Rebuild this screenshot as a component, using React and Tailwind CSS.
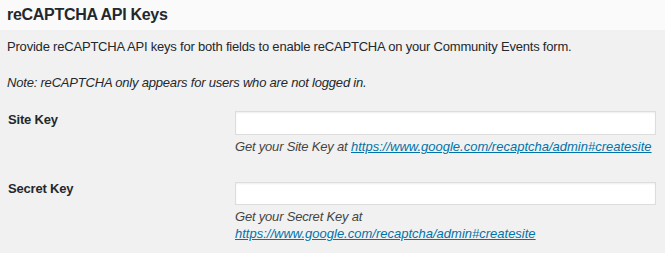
import React from 'react';

const link = 'https://www.google.com/recaptcha/admin#createsite';

function KeyRow({ label, hint, wrap, top }) {
  return <div className={`flex ${top}`}>
    <div className="w-[228px] shrink-0 pl-px text-[13px] font-bold leading-[18px] tracking-[-0.2px] text-[#23282d]">{label}</div>
    <div className="flex w-[421px] flex-col">
      <input type="text" className={`w-full border border-[#dddddd] bg-white shadow-[inset_0_1px_2px_rgba(0,0,0,0.07)] ${wrap ? 'h-[23px] mt-[2px]' : 'h-[24px]'}`} />
      <p className="mt-[3px] text-[13px] italic leading-[17px] text-[#444]">
        <span className="tracking-[-0.2px]">{hint}</span>{wrap ? <br /> : ' '}
        <a href="#" className="text-[#0073aa] underline">{link}</a>
      </p>
    </div>
  </div>;
}

export default function App() {
  return <div className="h-[253px] w-[665px] overflow-hidden bg-[#f1f1f1] font-['Liberation_Sans',Arial,sans-serif] text-[#23282d]">
    <div className="flex h-[30px] items-center bg-[#fafafa] pl-[7px]">
      <h2 className="text-[16px] font-bold leading-none tracking-[-0.3px]">reCAPTCHA API Keys</h2>
    </div>
    <div className="pl-[7px]">
      <p className="mt-[8px] text-[13px] leading-[18px] tracking-[-0.2px]">Provide reCAPTCHA API keys for both fields to enable reCAPTCHA on your Community Events form.</p>
      <p className="mt-[18px] text-[13px] italic leading-[18px] tracking-[-0.2px]">Note: reCAPTCHA only appears for users who are not logged in.</p>
      <KeyRow top="mt-[19px]" label="Site Key" hint="Get your Site Key at" />
      <KeyRow top="mt-[25px]" label="Secret Key" hint="Get your Secret Key at" wrap />
    </div>
  </div>;
}
